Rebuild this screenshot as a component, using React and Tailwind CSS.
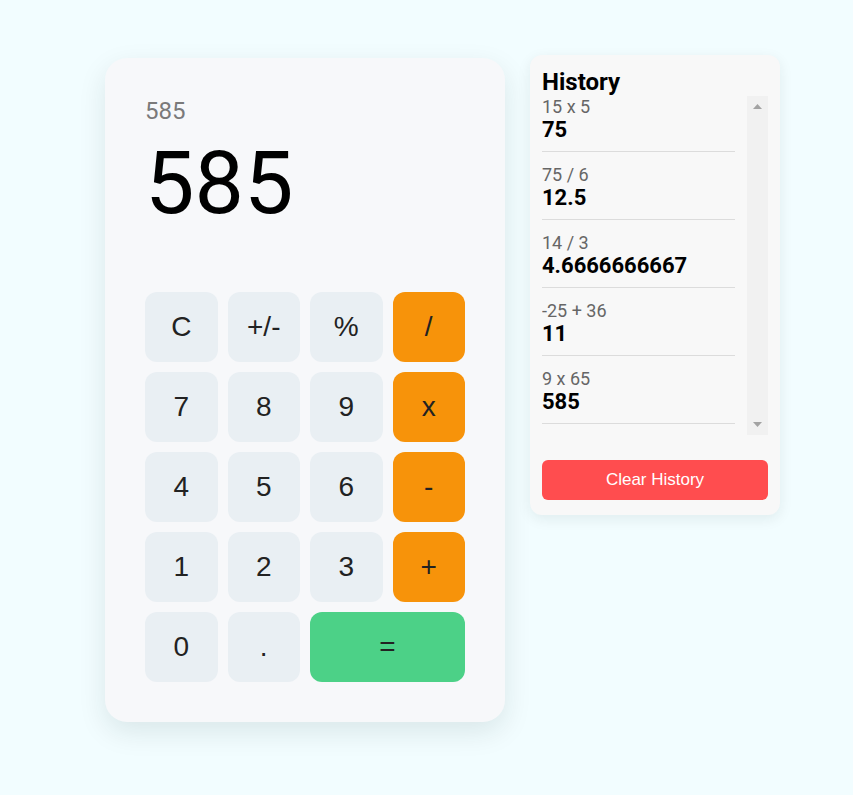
import React, { useState } from 'react';

const history = [
  { expr: '15 x 5', result: '75' },
  { expr: '75 / 6', result: '12.5' },
  { expr: '14 / 3', result: '4.6666666667' },
  { expr: '-25 + 36', result: '11' },
  { expr: '9 x 65', result: '585' },
];

const keys = [
  { label: 'C', kind: 'fn' },
  { label: '+/-', kind: 'fn' },
  { label: '%', kind: 'fn' },
  { label: '/', kind: 'op' },
  { label: '7' },
  { label: '8' },
  { label: '9' },
  { label: 'x', kind: 'op' },
  { label: '4' },
  { label: '5' },
  { label: '6' },
  { label: '-', kind: 'op' },
  { label: '1' },
  { label: '2' },
  { label: '3' },
  { label: '+', kind: 'op' },
  { label: '0' },
  { label: '.' },
  { label: '=', kind: 'eq' },
];

const Key = ({ label, kind }) => {
  let cls = 'bg-[#e9eff3]';
  if (kind === 'op') cls = 'bg-[#f7930a]';
  if (kind === 'eq') cls = 'bg-[#4cd187] col-span-2';
  return (
    <button
      className={`${cls} h-[70px] rounded-[12px] text-[28px] text-[#222] font-['Liberation_Sans',Arial,sans-serif] flex items-center justify-center`}
    >
      {label}
    </button>
  );
};

export default function App() {
  const [items, setItems] = useState(history);

  return (
    <div className="min-h-screen bg-[#f2fdff] flex items-start gap-[25px] pl-[105px] pt-[55px] font-['Roboto',sans-serif]">
      {/* Calculator */}
      <div className="mt-[3px] w-[400px] bg-[#f7f8fa] rounded-[22px] p-10 shadow-[0_10px_28px_rgba(0,40,40,0.1)]">
        <div className="pt-[1px] text-[24px] leading-none text-[#7a7a7a]">585</div>
        <div className="mt-4 text-[88px] leading-none text-black">585</div>
        <div className="mt-[65px] grid grid-cols-4 gap-[10px]">
          {keys.map((k) => (
            <Key key={k.label} {...k} />
          ))}
        </div>
      </div>

      {/* History */}
      <div className="w-[250px] bg-[#f8f8f8] rounded-[12px] px-3 pt-[14px] pb-[15px] shadow-[0_4px_14px_rgba(0,40,40,0.08)]">
        <h2 className="text-[24px] leading-[27px] font-bold text-black">History</h2>
        <div className="h-[339px] flex">
          <div className="flex-1 overflow-hidden">
            {items.map((h, i) => (
              <div key={i} className="mr-3 pb-2 mb-3 border-b border-[#dcdcdc]">
                <div className="text-[18px] leading-[21px] text-[#666]">{h.expr}</div>
                <div className="text-[22px] leading-[26px] font-bold text-black">{h.result}</div>
              </div>
            ))}
          </div>
          {/* scrollbar track */}
          <div className="w-[21px] bg-[#f1f1f1] flex flex-col items-center justify-between py-[8px]">
            <svg width="9" height="5" viewBox="0 0 9 5">
              <path d="M4.5 0L9 5H0z" fill="#a3a3a3" />
            </svg>
            <svg width="9" height="5" viewBox="0 0 9 5">
              <path d="M0 0h9L4.5 5z" fill="#a3a3a3" />
            </svg>
          </div>
        </div>
        <button
          onClick={() => setItems([])}
          className="mt-[25px] w-full h-10 rounded-[6px] bg-[#ff4d4f] text-white text-[17px] font-['Liberation_Sans',Arial,sans-serif]"
        >
          Clear History
        </button>
      </div>
    </div>
  );
}
